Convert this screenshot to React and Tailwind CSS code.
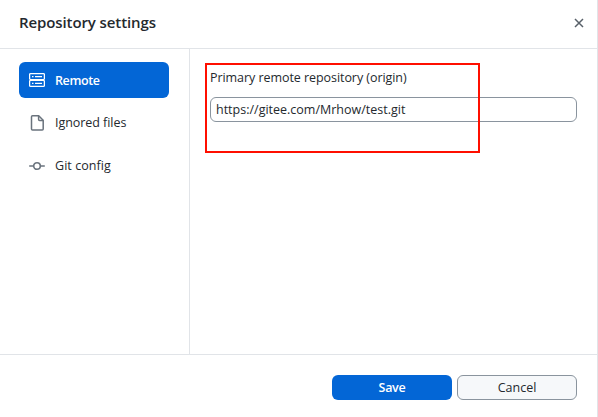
function ServerIcon() {
  return (
    <svg className="h-4 w-4" viewBox="0 0 16 16" fill="none" stroke="#fff" strokeWidth="1.3">
      <rect x="0.6" y="1.6" width="14.8" height="6" rx="1" />
      <rect x="0.6" y="8.4" width="14.8" height="6" rx="1" />
      <path d="M3 4.6h1.5M6 4.6h7M3 11.4h1.5M6 11.4h7" />
    </svg>
  );
}

function FileIcon() {
  return (
    <svg className="h-4 w-4" viewBox="0 0 16 16" fill="none" stroke="#6a737d" strokeWidth="1.5">
      <path d="M3.5 0.8h6.2l4.5 4.5v8.8a1 1 0 0 1-1 1H3.5a1 1 0 0 1-1-1V1.8a1 1 0 0 1 1-1Z" />
      <path d="M9.6 1v3.5a1 1 0 0 0 1 1h3.5" />
    </svg>
  );
}

function CommitIcon() {
  return (
    <svg className="mb-px h-4 w-4" viewBox="0 0 16 16" fill="none" stroke="#6a737d" strokeWidth="1.6">
      <circle cx="8" cy="8" r="3.3" />
      <path d="M0.2 8h4.5M11.3 8h4.5" />
    </svg>
  );
}

function Tab({ icon, label, tracking, active }) {
  return (
    <button
      className={
        active
          ? "flex h-9 w-full items-center gap-2.5 rounded-md bg-[#0366d6] px-2.5 font-semibold text-white"
          : "flex h-9 w-full items-center gap-2.5 rounded-md px-2.5 text-[#24292e]"
      }
    >
      {icon}
      <span className={tracking}>{label}</span>
    </button>
  );
}

export default function App() {
  return (
    <div className="flex h-[417px] w-[598px] flex-col overflow-hidden border-r border-[#e1e4e8] bg-white font-['Open_Sans','Noto_Sans',sans-serif] text-[12.5px] leading-5 text-[#24292e]">
      <header className="flex h-[49px] shrink-0 items-center justify-between border-b border-[#e1e4e8] pr-[13px] pl-[19px] pb-[2px]">
        <h1 className="pb-[2px] text-[15px] font-semibold tracking-[-0.1px]">Repository settings</h1>
        <button aria-label="Close">
          <svg className="h-[10px] w-[10px]" viewBox="0 0 10 10" fill="none" stroke="#586069" strokeWidth="1.5">
            <path d="M1 1l8 8M9 1L1 9" />
          </svg>
        </button>
      </header>
      <main className="flex h-[305px] shrink-0">
        <nav className="flex w-[190px] flex-col gap-[7px] border-r border-[#e1e4e8] pt-[13px] pr-5 pl-[19px]">
          <Tab active icon={<ServerIcon />} label="Remote" tracking="pt-[2px] tracking-[-0.4px]" />
          <Tab icon={<FileIcon />} label="Ignored files" tracking="tracking-[-0.05px]" />
          <Tab icon={<CommitIcon />} label="Git config" tracking="tracking-[0.05px]" />
        </nav>
        <section className="relative flex-1 pt-[19px] pr-5 pl-5">
          <label className="block">
            <span className="block h-[29px] tracking-[-0.06px]">Primary remote repository (origin)</span>
            <input
              className="block h-[25px] w-full rounded-md border border-[#8a949e] bg-white px-[5px] outline-none"
              defaultValue="https://gitee.com/Mrhow/test.git"
            />
          </label>
          <div className="pointer-events-none absolute top-[14px] left-[15px] h-[90px] w-[275px] border-2 border-[#ff0f00]" />
        </section>
      </main>
      <footer className="flex flex-1 justify-end gap-[5px] border-t border-[#e1e4e8] pt-5 pr-5">
        <button className="h-[25px] w-[120px] rounded-md bg-[#0366d6] font-semibold tracking-[-0.3px] text-white">Save</button>
        <button className="h-[25px] w-[120px] rounded-md border border-[#8a949e] bg-[#f6f8fa]">Cancel</button>
      </footer>
    </div>
  );
}
